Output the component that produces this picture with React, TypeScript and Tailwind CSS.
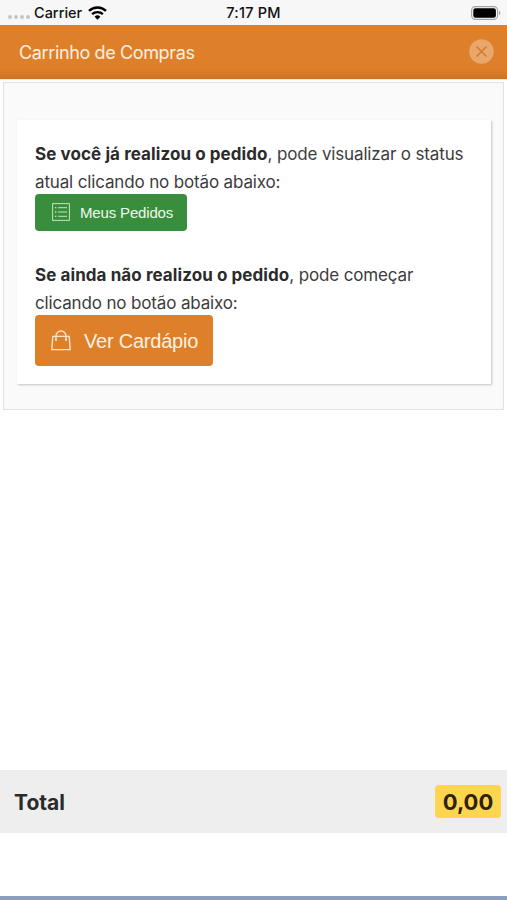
const StatusBar = () => (
  <div className="grid h-[25px] grid-cols-3 items-center bg-[#f7f7f7] text-[14.5px] font-medium leading-none text-[#111]">
    <div className="flex items-center pl-2">
      <div className="mt-2 flex gap-[2px]">
        {[0, 1, 2, 3].map((dot) => (
          <span key={dot} className="h-1 w-1 rounded-full bg-[#c6c6c6]" />
        ))}
      </div>
      <span className="ml-1 mt-[2px] whitespace-nowrap">Carrier</span>
      <svg width="19" height="14" viewBox="0 0 19 14" fill="none" className="ml-[6px]">
        <path d="M1 4.9a12.2 12.2 0 0 1 17 0" stroke="#000" strokeWidth="2.5" />
        <path d="M4.1 8.2a7.8 7.8 0 0 1 10.8 0" stroke="#000" strokeWidth="2.3" />
        <path d="M9.5 13.8 6.6 10.7a4.2 4.2 0 0 1 5.8 0z" fill="#000" />
      </svg>
    </div>
    <span className="mt-[2px] whitespace-nowrap text-center tracking-[0.2px]">7:17 PM</span>
    <div className="flex justify-end pr-[6px]">
      <svg width="30" height="14" viewBox="0 0 30 14" fill="none">
        <rect x="0.6" y="0.6" width="26" height="12.8" rx="3.8" stroke="#a3a3a3" strokeWidth="1.1" />
        <rect x="2.3" y="2.3" width="22.6" height="9.4" rx="2.2" fill="#000" />
        <path d="M28 4.8c1.8.7 1.8 3.7 0 4.4z" fill="#a3a3a3" />
      </svg>
    </div>
  </div>
);

const Header = () => (
  <header className="flex h-[54px] items-center justify-between bg-[#de8029] bg-linear-to-b from-[#de8029] from-82% to-[#c97425] pl-[19px] pr-[13px]">
    <h1 className="text-[18px] tracking-[-0.37px] text-[#fdf0e2]">Carrinho de Compras</h1>
    <button aria-label="Fechar" className="-mt-[2px]">
      <svg width="25" height="25" viewBox="0 0 25 25" fill="none">
        <circle cx="12.5" cy="12.5" r="12.2" fill="#e9a76c" />
        <path d="m7.5 7.5 10 10m0-10-10 10" stroke="#d7792a" strokeWidth="1.6" />
      </svg>
    </button>
  </header>
);

const ListIcon = () => (
  <svg width="18" height="18" viewBox="0 0 18 18" fill="none" stroke="#bfe5bd" className="-mt-[2px]">
    <rect x="0.6" y="0.6" width="16.8" height="16.8" />
    <path d="M6 4.7h9M6 9h9M6 13.3h9" />
    <path d="M3 4.7h1.4M3 9h1.4M3 13.3h1.4" strokeWidth="1.3" />
  </svg>
);

const BagIcon = () => (
  <svg width="20" height="21" viewBox="0 0 20 21" fill="none" stroke="#fde3c8" strokeWidth="1.4" className="-mt-px">
    <path d="M1.8 6.4h16.4l1 13.2H.8z" />
    <path d="M5 10.2V6a5 5 0 0 1 10 0v4.2" />
    <path d="M4.2 10h1.6M14.2 10h1.6" strokeWidth="1.8" />
  </svg>
);

const App = () => (
  <div className="flex h-[900px] w-[507px] flex-col overflow-hidden bg-white font-['Inter','Liberation_Sans',sans-serif]">
    <StatusBar />
    <Header />

    <main className="flex-1 border-t border-[#fbe6d0] pl-[3px] pr-[3px] pt-[2px]">
      <section className="border border-[#e2e2e4] bg-[#fafafa] px-[12px] pb-[25px] pt-[37px]">
        <div className="ml-px h-[264px] w-[474px] bg-white px-[18px] pt-5 text-[17px] leading-[28px] tracking-[-0.15px] text-[#3c3c3c] shadow-[1px_1px_2px_rgba(0,0,0,0.22)]">
          <p className="whitespace-nowrap">
            <b className="font-bold tracking-[0.08px] text-[#2b2b2b]">Se você já realizou o pedido</b>, pode visualizar o status
            <br />
            atual clicando no botão abaixo:
          </p>
          <button className="-mt-[2px] flex h-[37px] w-[152px] items-center rounded-[4px] bg-[#388e3c] pl-[17px] font-['Liberation_Sans',sans-serif] text-[15px] leading-none text-[#eef8ec]">
            <ListIcon />
            <span className="ml-[10px] whitespace-nowrap tracking-[-0.16px]">Meus Pedidos</span>
          </button>

          <p className="mt-[30px] whitespace-nowrap">
            <b className="font-bold tracking-[0.08px] text-[#2b2b2b]">Se ainda não realizou o pedido</b>, pode começar
            <br />
            clicando no botão abaixo:
          </p>
          <button className="-mt-[2px] flex h-[51px] w-[178px] items-center rounded-[4px] bg-[#de8029] pl-[16px] font-['Liberation_Sans',sans-serif] text-[20px] leading-none text-[#fdf0e2]">
            <BagIcon />
            <span className="ml-[13px] mt-px whitespace-nowrap tracking-[-0.22px]">Ver Cardápio</span>
          </button>
        </div>
      </section>
    </main>

    <footer>
      <div className="flex h-[63px] items-center justify-between bg-[#eeeeee] pl-[14px] pr-[6px] font-bold text-[#2b2b2b]">
        <span className="mt-[2px] text-[21px]">Total</span>
        <span className="flex h-[33px] w-[66px] items-center justify-center rounded-[4px] bg-[#ffd54f] pt-px text-[22px] text-[#2c2205]">
          0,00
        </span>
      </div>
      <div className="h-[63px] bg-white" />
      <div className="h-1 bg-[#8a9fbd]" />
    </footer>
  </div>
);

export default App;
